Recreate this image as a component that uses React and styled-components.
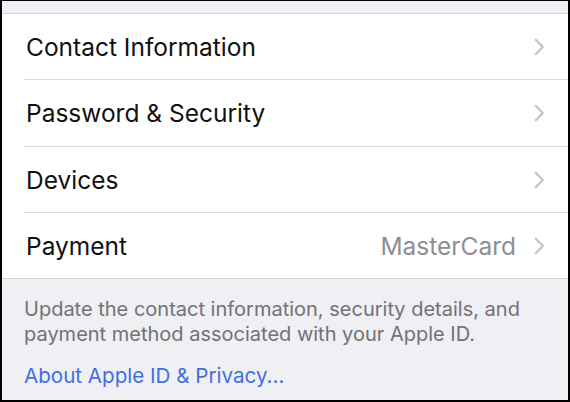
import React from "react";
import styled, { createGlobalStyle } from "styled-components";

const Global = createGlobalStyle`
  html, body { margin: 0; padding: 0; background: #000; }
  * { box-sizing: border-box; }
`;

const Frame = styled.div`
  width: 570px;
  height: 402px;
  background: #efeff4;
  border-style: solid;
  border-color: #000;
  border-width: 1px 2px 2px 2px;
  font-family: Inter, "Liberation Sans", sans-serif;
  overflow: hidden;
  display: flex;
  flex-direction: column;
`;

const TopBand = styled.div`
  height: 13px;
  flex-shrink: 0;
  border-bottom: 1px solid #d6d6da;
`;

const List = styled.div`
  background: #fff;
  border-bottom: 1px solid #d6d6da;
  display: flex;
  flex-direction: column;
  flex-shrink: 0;
`;

const Item = styled.div`
  padding-left: 22px;
  height: ${(p) => p.$h}px;
`;

const ItemInner = styled.div`
  height: 100%;
  display: flex;
  align-items: center;
  padding-right: 23px;
  border-bottom: ${(p) => (p.$last ? "none" : "1px solid #dcdce0")};
`;

const Label = styled.span`
  flex: 1;
  margin-left: 2px;
  font-size: 24.5px;
  color: #111;
`;

const Value = styled.span`
  font-size: 24.5px;
  color: #8e8e93;
  margin-right: 18px;
`;

const Chevron = () => (
  <svg width="11" height="18" viewBox="0 0 11 18" fill="none">
    <path
      d="M1.8 1.8 L8.8 9 L1.8 16.2"
      stroke="#c4c4c9"
      strokeWidth="2.3"
      strokeLinecap="round"
      strokeLinejoin="round"
    />
  </svg>
);

const Footer = styled.div`
  padding: 18px 20px 0 22px;
  display: flex;
  flex-direction: column;
  gap: 16px;
`;

const Note = styled.p`
  margin: 0;
  font-size: 20px;
  line-height: 25px;
  color: #727277;
  white-space: nowrap;
`;

const Link = styled.a`
  font-size: 20.6px;
  line-height: 25px;
  color: #3f70e0;
  text-decoration: none;
`;

const rows = [
  { label: "Contact Information", h: 66 },
  { label: "Password & Security", h: 67 },
  { label: "Devices", h: 66 },
  { label: "Payment", value: "MasterCard", h: 65 },
];

export default function App() {
  return (
    <>
      <Global />
      <Frame>
        <TopBand />
        <List>
          {rows.map((r, i) => (
            <Item key={r.label} $h={r.h}>
              <ItemInner $last={i === rows.length - 1}>
                <Label>{r.label}</Label>
                {r.value && <Value>{r.value}</Value>}
                <Chevron />
              </ItemInner>
            </Item>
          ))}
        </List>
        <Footer>
          <Note>
            Update the contact information, security details, and
            <br />
            payment method associated with your Apple ID.
          </Note>
          <Link>About Apple ID &amp; Privacy...</Link>
        </Footer>
      </Frame>
    </>
  );
}
